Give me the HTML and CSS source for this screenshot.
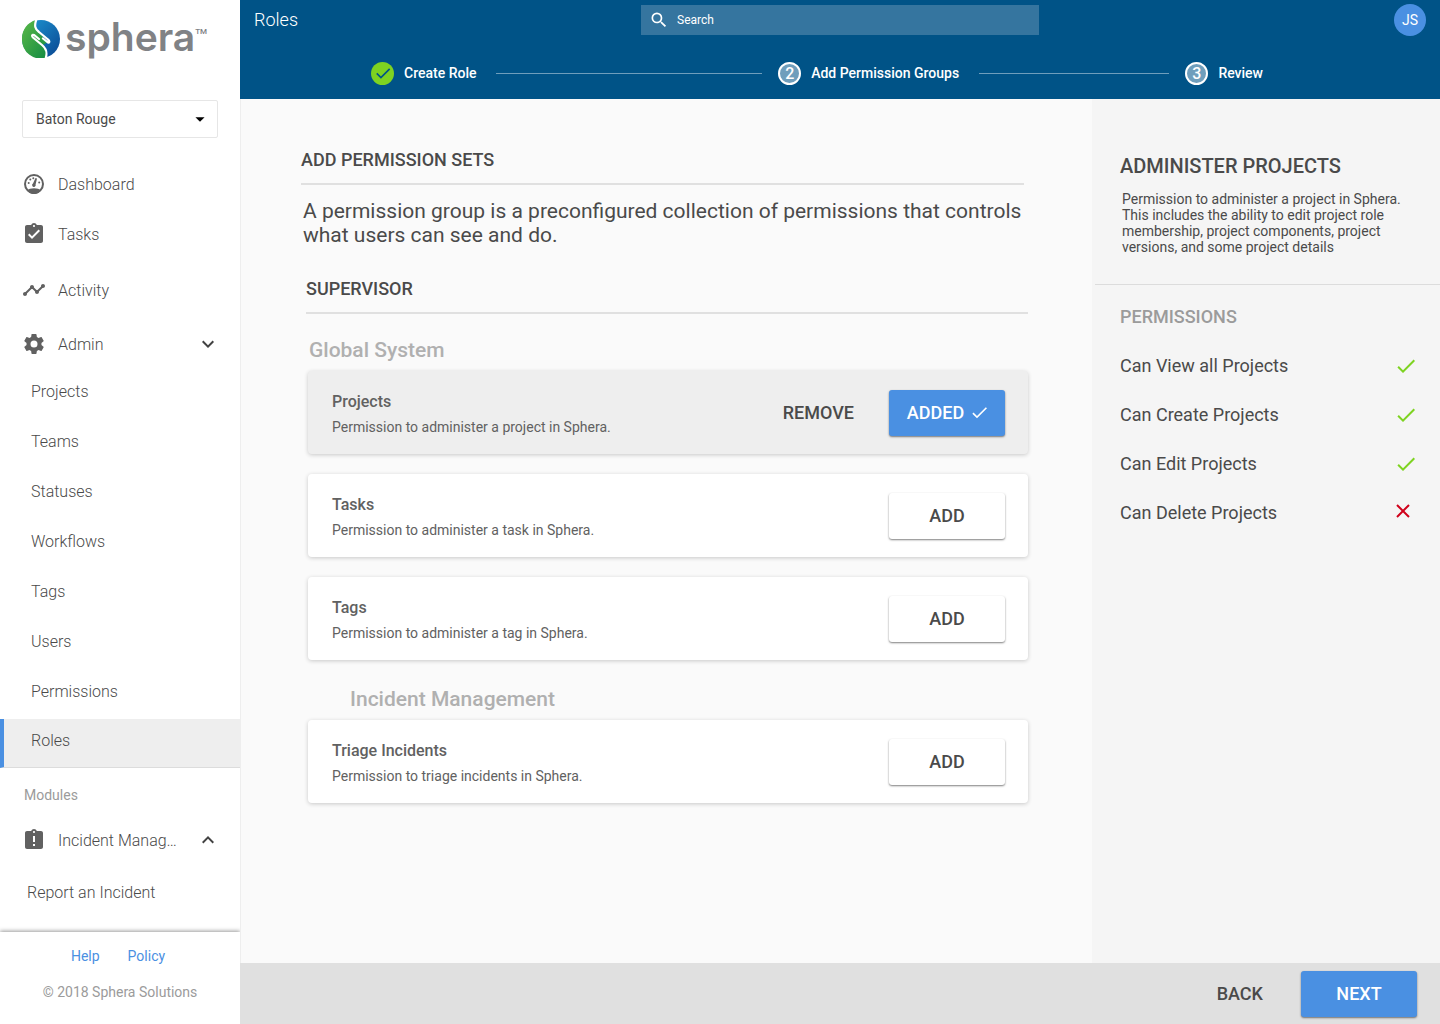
FILE: index.html
```html
<!DOCTYPE html>
<html lang="en">
<head>
    <meta charset="UTF-8">
    <meta name="viewport" content="width=device-width, initial-scale=1.0">
    <title>Sphera | Roles</title>
    <link rel="stylesheet" href="styles.css">
</head>
<body>

<div class="sidebar">
    <div class="logo">
        <svg class="logo-mark" viewBox="0 0 38 38" aria-hidden="true">
            <defs>
                <linearGradient id="green" x1="0" y1="0" x2="1" y2="1">
                    <stop offset="0" stop-color="#5bb947"/>
                    <stop offset="1" stop-color="#128a43"/>
                </linearGradient>
                <linearGradient id="blue" x1="0" y1="0" x2="1" y2="1">
                    <stop offset="0" stop-color="#1d9ad6"/>
                    <stop offset="1" stop-color="#0a4590"/>
                </linearGradient>
            </defs>
            <circle cx="19" cy="19" r="19" fill="url(#blue)"/>
            <path fill="url(#green)" d="M14 0A19 19 0 0 0 0 19A19 19 0 0 0 24 38C25 33 25 29 21 25L26 22L16 12C12 9 12 5 14 0Z"/>
            <path fill="none" stroke="#fff" stroke-width="2.200" stroke-linecap="round" d="M14.500 -1C12 6 13 9 17 12L26 19.500C28 21 27.500 23 26 22.500L21 18.500"/>
            <path fill="none" stroke="#fff" stroke-width="2.200" stroke-linecap="round" d="M17 19L12 15C10 14 9.500 16 11 17.500L20 25C25 29 25.500 33 23.500 39"/>
        </svg>
        <span class="logo-text">sphera</span>
        <span class="logo-tm">TM</span>
    </div>

    <div class="site">
        <select class="site-select" aria-label="Site">
            <option>Baton Rouge</option>
        </select>
        <svg class="site-caret" viewBox="0 0 24 24" aria-hidden="true"><path d="M7 10l5 5 5-5z"/></svg>
    </div>

    <nav class="nav">
        <a class="nav-item" href="#">
            <svg class="nav-icon" viewBox="0 0 24 24" aria-hidden="true">
                <circle cx="12" cy="12" r="9" fill="none" stroke="currentColor" stroke-width="2"/>
                <path d="M5 18.500C8 15.500 16 15.500 19 18.500L17 20.500C14 22.500 10 22.500 7 20.500Z"/>
                <path d="M13.500 6L15 6.500L13.600 12.500A1.800 1.800 0 1 1 11 11.600Z"/>
                <circle cx="6.700" cy="11" r="1"/>
                <circle cx="8.300" cy="7.600" r="1"/>
                <circle cx="11.300" cy="6.200" r="1"/>
                <circle cx="17.200" cy="10.500" r="1"/>
            </svg>
            Dashboard
        </a>
        <a class="nav-item" href="#">
            <svg class="nav-icon" viewBox="0 0 24 24" aria-hidden="true"><path d="M19 3h-4.180C14.400 1.840 13.300 1 12 1c-1.300 0-2.400.84-2.820 2H5c-1.100 0-2 .9-2 2v14c0 1.100.9 2 2 2h14c1.100 0 2-.9 2-2V5c0-1.100-.9-2-2-2zm-7 0c.55 0 1 .45 1 1s-.45 1-1 1-1-.45-1-1 .45-1 1-1zm-2 14l-4-4 1.410-1.410L10 14.170l6.590-6.590L18 9l-8 8z"/></svg>
            Tasks
        </a>
        <a class="nav-item nav-item-tall" href="#">
            <svg class="nav-icon" viewBox="0 0 24 24" aria-hidden="true"><path d="M23 8c0 1.100-.9 2-2 2-.18 0-.35-.02-.51-.07l-3.560 3.550c.05.16.07.34.07.52 0 1.100-.9 2-2 2s-2-.9-2-2c0-.18.02-.36.07-.52l-2.550-2.550c-.16.05-.34.07-.52.07s-.36-.02-.52-.07l-4.550 4.560c.05.16.07.33.07.51 0 1.100-.9 2-2 2s-2-.9-2-2 .9-2 2-2c.18 0 .35.02.51.07l4.560-4.550C8.020 9.360 8 9.180 8 9c0-1.100.9-2 2-2s2 .9 2 2c0 .18-.02.36-.07.52l2.550 2.550c.16-.05.34-.07.52-.07s.36.02.52.07l3.550-3.560C19.020 8.350 19 8.180 19 8c0-1.100.9-2 2-2s2 .9 2 2z"/></svg>
            Activity
        </a>
        <a class="nav-item nav-item-group" href="#">
            <svg class="nav-icon" viewBox="0 0 24 24" aria-hidden="true"><path d="M12 15.500A3.500 3.500 0 0 1 8.500 12 3.500 3.500 0 0 1 12 8.500a3.500 3.500 0 0 1 3.500 3.500 3.500 3.500 0 0 1-3.500 3.500m7.430-2.530c.04-.32.07-.64.07-.97s-.03-.66-.07-1l2.110-1.630c.19-.15.24-.42.12-.64l-2-3.460c-.12-.22-.39-.31-.61-.22l-2.490 1c-.52-.39-1.060-.73-1.690-.98l-.37-2.650A.506.506 0 0 0 14 2h-4c-.25 0-.46.18-.5.42l-.37 2.650c-.63.25-1.170.59-1.690.98l-2.490-1c-.22-.09-.49 0-.61.22l-2 3.460c-.13.22-.07.49.12.64L4.570 11c-.04.34-.07.67-.07 1s.03.65.07.97l-2.110 1.660c-.19.15-.25.42-.12.64l2 3.460c.12.22.39.3.61.22l2.490-1.010c.52.4 1.060.74 1.690.99l.37 2.650c.04.24.25.42.5.42h4c.25 0 .46-.18.5-.42l.37-2.650c.63-.26 1.170-.59 1.690-.99l2.490 1.010c.22.08.49 0 .61-.22l2-3.460c.12-.22.07-.49-.12-.64z"/></svg>
            Admin
            <svg class="nav-chevron" viewBox="0 0 24 24" aria-hidden="true"><path d="M7.410 8.590L12 13.170l4.590-4.580L18 10l-6 6-6-6z"/></svg>
        </a>

        <a class="nav-sub" href="#">Projects</a>
        <a class="nav-sub" href="#">Teams</a>
        <a class="nav-sub" href="#">Statuses</a>
        <a class="nav-sub" href="#">Workflows</a>
        <a class="nav-sub" href="#">Tags</a>
        <a class="nav-sub" href="#">Users</a>
        <a class="nav-sub" href="#">Permissions</a>
        <a class="nav-sub nav-sub-active" href="#">Roles</a>

        <div class="nav-label">Modules</div>
        <a class="nav-item nav-item-module" href="#">
            <svg class="nav-icon" viewBox="0 0 24 24" aria-hidden="true"><path d="M19 3h-4.180C14.400 1.840 13.300 1 12 1c-1.300 0-2.400.84-2.820 2H5c-1.100 0-2 .9-2 2v14c0 1.100.9 2 2 2h14c1.100 0 2-.9 2-2V5c0-1.100-.9-2-2-2zm-6 15h-2v-2h2v2zm0-4h-2V8h2v6zm-1-9c-.55 0-1-.45-1-1s.45-1 1-1 1 .45 1 1-.45 1-1 1z"/></svg>
            Incident Manag…
            <svg class="nav-chevron" viewBox="0 0 24 24" aria-hidden="true"><path d="M12 8l-6 6 1.410 1.410L12 10.830l4.590 4.580L18 14z"/></svg>
        </a>
        <a class="nav-report" href="#">Report an Incident</a>
    </nav>

    <div class="sidebar-footer">
        <div class="footer-links">
            <a href="#">Help</a>
            <a href="#">Policy</a>
        </div>
        <p class="copyright">© 2018 Sphera Solutions</p>
    </div>
</div>

<div class="page">
    <header class="header">
        <div class="topbar">
            <h1 class="page-title">Roles</h1>
            <label class="search">
                <svg class="search-icon" viewBox="0 0 24 24" aria-hidden="true"><path d="M15.500 14h-.79l-.28-.27A6.471 6.471 0 0 0 16 9.500 6.500 6.500 0 1 0 9.500 16c1.610 0 3.090-.59 4.230-1.570l.27.28v.79l5 4.990L20.490 19l-4.990-5zm-6 0C7.010 14 5 11.990 5 9.500S7.010 5 9.500 5 14 7.010 14 9.500 11.990 14 9.500 14z"/></svg>
                <input class="search-input" type="text" placeholder="Search" aria-label="Search">
            </label>
            <button class="avatar">JS</button>
        </div>

        <ol class="steps">
            <li class="step">
                <span class="step-badge step-done">
                    <svg viewBox="0 0 24 24" aria-hidden="true"><path fill="none" stroke="currentColor" stroke-width="2" d="M4.500 12.500l5 5L20 7"/></svg>
                </span>
                Create Role
                <span class="step-line"></span>
            </li>
            <li class="step">
                <span class="step-badge">2</span>
                Add Permission Groups
                <span class="step-line"></span>
            </li>
            <li class="step">
                <span class="step-badge">3</span>
                Review
            </li>
        </ol>
    </header>

    <div class="content">
        <main class="main">
            <section class="intro">
                <h2 class="heading">ADD PERMISSION SETS</h2>
                <p class="intro-text">A permission group is a preconfigured collection of permissions that controls what users can see and do.</p>
            </section>

            <section class="sets">
                <h2 class="heading">SUPERVISOR</h2>

                <div class="group">
                    <h3 class="group-title">Global System</h3>
                    <div class="card card-selected">
                        <div class="card-text">
                            <h4>Projects</h4>
                            <p>Permission to administer a project in Sphera.</p>
                        </div>
                        <button class="button button-flat">REMOVE</button>
                        <button class="button button-primary">ADDED
                            <svg class="button-check" viewBox="3 3 18 18" aria-hidden="true"><path d="M9 16.170L4.830 12l-1.420 1.410L9 19 21 7l-1.410-1.410z"/></svg>
                        </button>
                    </div>
                    <div class="card">
                        <div class="card-text">
                            <h4>Tasks</h4>
                            <p>Permission to administer a task in Sphera.</p>
                        </div>
                        <button class="button">ADD</button>
                    </div>
                    <div class="card">
                        <div class="card-text">
                            <h4>Tags</h4>
                            <p>Permission to administer a tag in Sphera.</p>
                        </div>
                        <button class="button">ADD</button>
                    </div>
                </div>

                <div class="group">
                    <h3 class="group-title group-title-indent">Incident Management</h3>
                    <div class="card">
                        <div class="card-text">
                            <h4>Triage Incidents</h4>
                            <p>Permission to triage incidents in Sphera.</p>
                        </div>
                        <button class="button">ADD</button>
                    </div>
                </div>
            </section>
        </main>

        <aside class="details">
            <div class="details-head">
                <h2>ADMINISTER PROJECTS</h2>
                <p>Permission to administer a project in Sphera. This includes the ability to edit project role membership, project components, project versions, and some project details</p>
            </div>
            <h3 class="details-label">PERMISSIONS</h3>
            <ul class="permissions">
                <li>Can View all Projects
                    <svg class="allowed" viewBox="0 0 24 24" role="img" aria-label="Allowed"><path d="M9 16.170L4.830 12l-1.420 1.410L9 19 21 7l-1.410-1.410z"/></svg>
                </li>
                <li>Can Create Projects
                    <svg class="allowed" viewBox="0 0 24 24" role="img" aria-label="Allowed"><path d="M9 16.170L4.830 12l-1.420 1.410L9 19 21 7l-1.410-1.410z"/></svg>
                </li>
                <li>Can Edit Projects
                    <svg class="allowed" viewBox="0 0 24 24" role="img" aria-label="Allowed"><path d="M9 16.170L4.830 12l-1.420 1.410L9 19 21 7l-1.410-1.410z"/></svg>
                </li>
                <li>Can Delete Projects
                    <svg class="denied" viewBox="0 0 24 24" role="img" aria-label="Denied"><path fill="none" stroke="currentColor" stroke-width="2" d="M3 4l12 12M15 4L3 16"/></svg>
                </li>
            </ul>
        </aside>
    </div>

    <footer class="actions">
        <button class="button button-flat">BACK</button>
        <button class="button button-primary">NEXT</button>
    </footer>
</div>

</body>
</html>
```
FILE: styles.css
```css
* {
    box-sizing: border-box;
}
body {
    font-family: Roboto, Arial, sans-serif;
    display: flex;
    min-height: 100vh;
    margin: 0;
    background-color: #fff;
    color: #4a4a4a;
}
h1, h2, h3, h4, p, ul, ol {
    margin: 0;
    padding: 0;
}
ul, ol {
    list-style: none;
}
a {
    color: inherit;
    text-decoration: none;
}
button, input, select {
    font-family: inherit;
}
svg {
    fill: currentColor;
    flex-shrink: 0;
}

/* Sidebar */
.sidebar {
    width: 240px;
    flex-shrink: 0;
    display: flex;
    flex-direction: column;
    background-color: #fff;
}
.logo {
    display: flex;
    align-items: flex-start;
    height: 100px;
    padding: 20px 0 0 22px;
    color: #808285;
}
.logo-mark {
    width: 38px;
    height: 38px;
}
.logo-text {
    margin-left: 5px;
    font-family: Inter, Arial, sans-serif;
    font-size: 39px;
    font-weight: 600;
    line-height: 34px;
}
.logo-tm {
    font-size: 8px;
    font-weight: 500;
    line-height: 24px;
}
.site {
    position: relative;
    margin: 0 22px 21px;
}
.site-select {
    display: block;
    width: 100%;
    height: 38px;
    padding: 0 13px;
    border: 1px solid #e6e6e6;
    border-radius: 2px;
    background-color: #fff;
    color: #4a4a4a;
    font-size: 14px;
    appearance: none;
}
.site-caret {
    position: absolute;
    top: 8px;
    right: 7px;
    width: 22px;
    height: 22px;
    color: #000;
    pointer-events: none;
}
.nav {
    font-size: 16px;
    font-weight: 300;
}
.nav-item {
    display: flex;
    align-items: center;
    height: 50px;
    padding: 0 20px 0 22px;
}
.nav-item-tall {
    height: 62px;
}
.nav-item-group {
    height: 46px;
}
.nav-item-module {
    height: 36px;
}
.nav-icon {
    width: 24px;
    height: 24px;
    margin-right: 12px;
    color: #616161;
}
.nav-chevron {
    width: 24px;
    height: 24px;
    margin-left: auto;
    color: #424242;
}
.nav-sub {
    display: block;
    padding-left: 31px;
    line-height: 50px;
}
.nav-sub-active {
    margin-top: 2px;
    padding: 0 0 4px 27px;
    border-left: 4px solid #4a90e2;
    border-bottom: 1px solid #dcdcdc;
    background-color: #eee;
    line-height: 44px;
}
.nav-label {
    padding-left: 24px;
    color: #9b9b9b;
    font-size: 14px;
    font-weight: 400;
    line-height: 54px;
}
.nav-report {
    display: block;
    padding-left: 27px;
    line-height: 70px;
}
.sidebar-footer {
    margin-top: auto;
    height: 92px;
    padding-top: 16px;
    background-color: #fff;
    box-shadow: 0 -1px 4px rgba(0, 0, 0, 0.4);
    color: #9b9b9b;
    font-size: 14px;
    line-height: 16px;
    text-align: center;
}
.footer-links {
    display: flex;
    justify-content: center;
    gap: 28px;
    margin-bottom: 20px;
    padding-right: 4px;
    color: #4a90e2;
}

/* Header */
.page {
    flex: 1;
    display: flex;
    flex-direction: column;
    min-width: 0;
}
.header {
    height: 99px;
    background-color: #005387;
    color: #fff;
}
.topbar {
    display: grid;
    grid-template-columns: 1fr 398px 1fr;
    align-items: center;
    height: 39px;
    padding: 0 14px;
}
.page-title {
    font-size: 18px;
    font-weight: 300;
}
.search {
    display: flex;
    align-items: center;
    height: 30px;
    padding-left: 8px;
    background-color: #35759f;
}
.search-icon {
    width: 20px;
    height: 20px;
    margin-right: 8px;
}
.search-input {
    flex: 1;
    padding: 0;
    border: none;
    outline: none;
    background: none;
    color: #fff;
    font-size: 12px;
}
.search-input::placeholder {
    color: #fff;
}
.avatar {
    justify-self: end;
    width: 32px;
    height: 32px;
    padding: 0;
    border: none;
    border-radius: 50%;
    background-color: #4a90e2;
    color: #fff;
    font-size: 14px;
}
.steps {
    display: grid;
    grid-template-columns: 1fr 1fr auto;
    padding: 22px 177px 0 131px;
}
.step {
    display: flex;
    align-items: center;
    height: 24px;
    font-size: 14px;
    font-weight: 500;
    white-space: nowrap;
}
.step-badge {
    display: flex;
    align-items: center;
    justify-content: center;
    width: 23px;
    height: 23px;
    margin-right: 10px;
    border: 2px solid #fff;
    border-radius: 50%;
    background-color: #6f9ebc;
    font-size: 16px;
}
.step-done {
    border: none;
    background-color: #7ed321;
    color: #005387;
}
.step-done svg {
    width: 20px;
    height: 20px;
}
.step-line {
    flex: 1;
    height: 1px;
    margin: 0 16px 0 20px;
    background-color: #6f9ebc;
}

/* Content */
.content {
    flex: 1;
    display: flex;
}
.main {
    flex: 1;
    border-left: 1px solid #eee;
    background-color: #fafafa;
}
.intro {
    padding: 50px 68px 0 60px;
}
.sets {
    padding: 31px 64px 40px 65px;
}
.heading {
    padding-bottom: 12px;
    border-bottom: 2px solid #e0e0e0;
    font-size: 18px;
    font-weight: 500;
    line-height: 22px;
}
.intro-text {
    padding: 14px 0 0 2px;
    font-size: 21px;
    line-height: 24px;
}
.group {
    padding: 24px 0 4px 2px;
}
.group + .group {
    padding-top: 3px;
}
.group-title {
    margin: 0 0 9px 1px;
    color: #b0b0b0;
    font-size: 21px;
    font-weight: 500;
    line-height: 24px;
}
.group-title-indent {
    margin-left: 42px;
}
.card {
    display: flex;
    align-items: center;
    height: 83px;
    margin-bottom: 20px;
    padding: 0 23px 0 24px;
    border-radius: 4px;
    background-color: #fff;
    box-shadow: 0 1px 4px rgba(0, 0, 0, 0.2);
}
.card-selected {
    background-color: #eee;
}
.card-text {
    flex: 1;
    padding-top: 3px;
    color: #616161;
}
.card-text h4 {
    margin-bottom: 5px;
    font-size: 16px;
    font-weight: 500;
    line-height: 20px;
}
.card-text p {
    font-size: 14px;
    line-height: 20px;
}
.button {
    display: flex;
    align-items: center;
    justify-content: center;
    width: 116px;
    height: 46px;
    padding: 0;
    border: none;
    border-radius: 3px;
    background-color: #fff;
    box-shadow: 0 1px 2px rgba(0, 0, 0, 0.5);
    color: #4a4a4a;
    font-size: 18px;
    font-weight: 500;
    cursor: pointer;
}
.button-primary {
    background-color: #4a90e2;
    color: #fff;
}
.button-flat {
    width: auto;
    margin-right: 35px;
    background: none;
    box-shadow: none;
}
.button-check {
    width: 15px;
    height: 15px;
    margin-left: 8px;
}

/* Details panel */
.details {
    width: 348px;
    flex-shrink: 0;
    background-color: #f5f5f5;
}
.details-head {
    margin-left: 3px;
    padding: 55px 34px 29px 25px;
    border-bottom: 1px solid #dcdcdc;
}
.details-head h2 {
    margin-bottom: 13px;
    font-size: 20px;
    font-weight: 500;
    line-height: 24px;
}
.details-head p {
    padding-left: 2px;
    font-size: 14px;
    line-height: 16px;
}
.details-label {
    margin: 21px 0 13px 28px;
    color: #9b9b9b;
    font-size: 18px;
    font-weight: 500;
    line-height: 22px;
}
.permissions li {
    display: flex;
    align-items: center;
    justify-content: space-between;
    height: 49px;
    padding: 0 22px 0 28px;
    font-size: 18px;
}
.permissions svg {
    width: 24px;
    height: 24px;
}
.allowed {
    color: #7ed321;
}
.denied {
    color: #d0021b;
}

/* Bottom bar */
.actions {
    display: flex;
    align-items: center;
    justify-content: flex-end;
    height: 61px;
    padding-right: 23px;
    background-color: #e0e0e0;
}
.actions .button-flat {
    margin-right: 38px;
}
```
